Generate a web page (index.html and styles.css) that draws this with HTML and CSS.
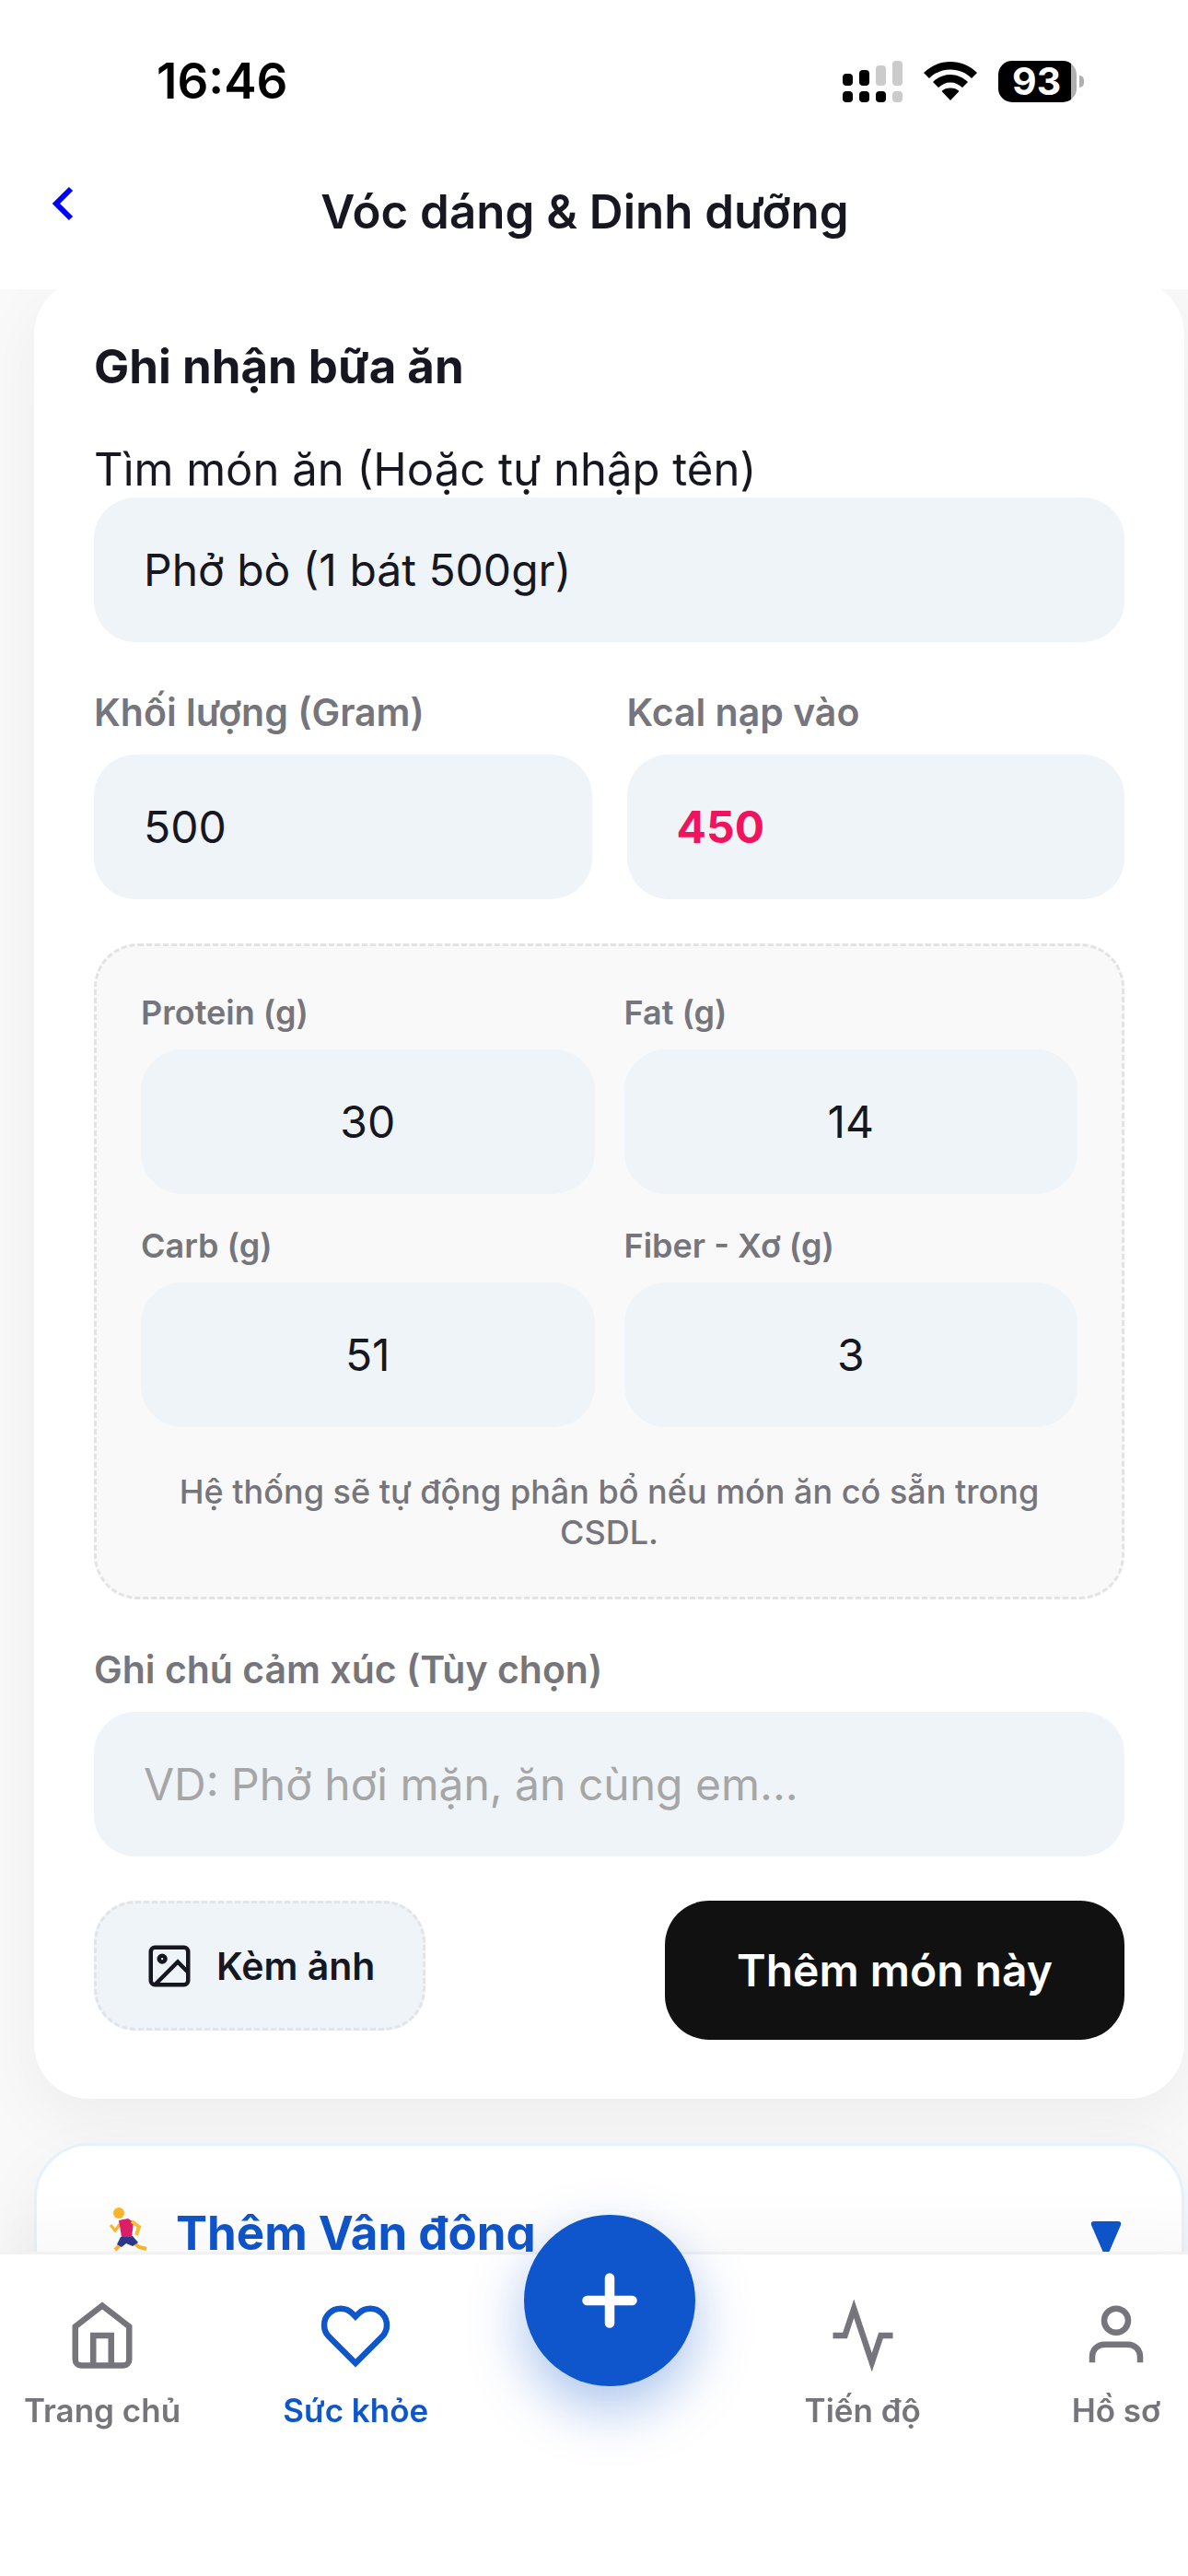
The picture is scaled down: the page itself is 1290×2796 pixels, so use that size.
FILE: index.html
```html
<!DOCTYPE html>
<html lang="vi">

<head>
    <meta charset="UTF-8">
    <meta name="viewport" content="width=device-width, initial-scale=1.0">
    <title>Vóc dáng &amp; Dinh dưỡng</title>
    <link rel="stylesheet" href="styles.css">
</head>

<body>
    <header class="topbar">
        <div class="status">
            <span class="time">16:46</span>
            <div class="status-icons">
                <svg class="signal" width="65" height="45" viewBox="0 0 65 45" fill="#000">
                    <rect x="0" y="14" width="11" height="13" rx="4"/>
                    <rect x="18" y="10" width="11" height="17" rx="4"/>
                    <rect x="36" y="5" width="11" height="22" rx="4" fill="#cbcbcb"/>
                    <rect x="54" y="0" width="11" height="27" rx="4" fill="#cbcbcb"/>
                    <rect x="0" y="33" width="11" height="12" rx="4"/>
                    <rect x="18" y="33" width="11" height="12" rx="4"/>
                    <rect x="36" y="33" width="11" height="12" rx="4"/>
                    <rect x="54" y="33" width="11" height="12" rx="4" fill="#cbcbcb"/>
                </svg>
                <svg class="wifi" width="58" height="45" viewBox="0 0 58 45" fill="#000">
                    <path d="M29 1C18 1 8 5 0 13l6 6C12 13 20 9.500 29 9.500S46 13 52 19l6-6C50 5 40 1 29 1z"/>
                    <path d="M29 15c-7 0-14 3-19 8l6 6c4-3.500 8-5.500 13-5.500s9 2 13 5.500l6-6c-5-5-12-8-19-8z"/>
                    <path d="M29 29.500c-4 0-7 1-9.500 3.500L29 43l9.500-10c-2.500-2.500-5.500-3.500-9.500-3.500z"/>
                </svg>
                <div class="battery"><span>93</span></div>
            </div>
        </div>
        <div class="title-row">
            <a class="back" href="#" aria-label="Quay lại">
                <svg width="24" height="38" viewBox="0 0 24 38" fill="none" stroke="#00f" stroke-width="6">
                    <path d="M21 3L5 19l16 16"/>
                </svg>
            </a>
            <h1>Vóc dáng &amp; Dinh dưỡng</h1>
        </div>
    </header>

    <main>
        <form class="card" onsubmit="return false">
            <h2>Ghi nhận bữa ăn</h2>

            <label class="search-label" for="food">Tìm món ăn (Hoặc tự nhập tên)</label>
            <input type="text" id="food" value="Phở bò (1 bát 500gr)">

            <div class="row">
                <div class="field">
                    <label for="weight">Khối lượng (Gram)</label>
                    <input type="text" inputmode="numeric" id="weight" value="500">
                </div>
                <div class="field">
                    <label for="kcal">Kcal nạp vào</label>
                    <input type="text" inputmode="numeric" id="kcal" class="kcal" value="450">
                </div>
            </div>

            <div class="macros">
                <div class="macro">
                    <label for="protein">Protein (g)</label>
                    <input type="text" inputmode="numeric" id="protein" value="30">
                </div>
                <div class="macro">
                    <label for="fat">Fat (g)</label>
                    <input type="text" inputmode="numeric" id="fat" value="14">
                </div>
                <div class="macro">
                    <label for="carb">Carb (g)</label>
                    <input type="text" inputmode="numeric" id="carb" value="51">
                </div>
                <div class="macro">
                    <label for="fiber">Fiber - Xơ (g)</label>
                    <input type="text" inputmode="numeric" id="fiber" value="3">
                </div>
                <p>Hệ thống sẽ tự động phân bổ nếu món ăn có sẵn trong CSDL.</p>
            </div>

            <div class="field">
                <label for="note">Ghi chú cảm xúc (Tùy chọn)</label>
                <input type="text" id="note" placeholder="VD: Phở hơi mặn, ăn cùng em...">
            </div>

            <div class="actions">
                <button type="button" class="attach">
                    <svg width="54" height="54" viewBox="0 0 24 24" fill="none" stroke="currentColor" stroke-width="2">
                        <rect x="3" y="3" width="18" height="18" rx="2"/>
                        <circle cx="8.500" cy="8.500" r="1.500"/>
                        <path d="M21 15l-5-5L5 21"/>
                    </svg>
                    Kèm ảnh
                </button>
                <button type="submit" class="submit">Thêm món này</button>
            </div>
        </form>

        <section class="card exercise">
            <h2>
                <svg width="60" height="54" viewBox="0 0 60 54">
                    <g fill="none" stroke="#fbb62b" stroke-width="4">
                        <path d="M27 41l-7 7"/>
                        <path d="M40 40l6 5 8 2"/>
                        <path d="M26 19l-6 8-5-6" stroke-width="3"/>
                    </g>
                    <path d="M26 34l13-1 6 7-6 4-7-3-5 4-5-3z" fill="#2b3a8f"/>
                    <path d="M24 16l10-2 6 4-2 16H27z" fill="#e01e6a"/>
                    <path d="M38 17l8 6-3 9" fill="none" stroke="#fbc02d" stroke-width="4"/>
                    <circle cx="24" cy="8" r="6" fill="#fbb62b"/>
                </svg>
                Thêm Vận động
            </h2>
            <svg class="arrow" width="34" height="40" viewBox="0 0 34 40" fill="#0f56cc">
                <path d="M4 1h26q4 0 3 4L20 35q-3 5-6 0L1 5Q0 1 4 1z"/>
            </svg>
        </section>
    </main>

    <nav class="tabbar">
        <a href="#">
            <svg viewBox="0 0 24 24"><path d="M3 9l9-7 9 7v11a2 2 0 0 1-2 2H5a2 2 0 0 1-2-2z"/><path d="M9 22V12h6v10"/></svg>
            Trang chủ
        </a>
        <a href="#" class="active">
            <svg viewBox="0 0 24 24"><path d="M20.840 4.610a5.500 5.500 0 0 0-7.780 0L12 5.670l-1.060-1.060a5.500 5.500 0 0 0-7.780 7.780l1.060 1.060L12 21.230l7.780-7.780 1.060-1.060a5.500 5.500 0 0 0 0-7.780z"/></svg>
            Sức khỏe
        </a>
        <div class="tab-middle">
            <button type="button" class="fab" aria-label="Thêm">
                <svg viewBox="0 0 24 24"><path d="M12 5v14M5 12h14"/></svg>
            </button>
        </div>
        <a href="#">
            <svg viewBox="0 0 24 24"><path d="M22 12h-4l-3 9L9 3l-3 9H2"/></svg>
            Tiến độ
        </a>
        <a href="#">
            <svg viewBox="0 0 24 24"><path d="M20 21v-2a4 4 0 0 0-4-4H8a4 4 0 0 0-4 4v2"/><circle cx="12" cy="7" r="4"/></svg>
            Hồ sơ
        </a>
    </nav>
</body>

</html>
```
FILE: styles.css
```css
* {
    box-sizing: border-box;
}

body {
    margin: 0;
    height: 100vh;
    overflow: hidden;
    background-color: #f9f9f9;
    color: #171721;
    font-family: Inter, "Noto Sans", sans-serif;
    font-size: 48px;
    display: flex;
    flex-direction: column;
}

h1,
h2 {
    margin: 0;
    font-size: 51px;
    line-height: 60px;
    font-weight: 700;
}

a {
    text-decoration: none;
}

input,
button {
    font-family: inherit;
    font-size: 48px;
    color: inherit;
    border: none;
}

/* top */

.topbar {
    flex: none;
    background-color: #fff;
    padding-bottom: 54px;
    z-index: 1;
}

.status {
    display: flex;
    justify-content: space-between;
    align-items: center;
    padding: 58px 121px 0 170px;
}

.time {
    font-size: 53px;
    line-height: 60px;
    font-weight: 600;
    color: #000;
}

.status-icons {
    display: flex;
    align-items: center;
    gap: 23px;
}

.battery {
    position: relative;
    width: 85px;
    height: 45px;
    border-radius: 15px;
    background: linear-gradient(to right, #000 79px, #b0b0b0 79px);
    color: #fff;
    font-size: 41px;
    line-height: 45px;
    font-weight: 700;
    padding-left: 15px;
}

.battery::after {
    content: "";
    position: absolute;
    left: 88px;
    top: 16px;
    width: 5px;
    height: 13px;
    border-radius: 0 6px 6px 0;
    background-color: #b0b0b0;
}

.title-row {
    display: flex;
    padding: 82px 56px 0;
}

.title-row h1 {
    flex: 1;
    text-align: center;
    font-weight: 600;
    padding: 0 44px 0 0;
}

.back {
    padding-top: 2px;
}

.back svg {
    display: block;
}

/* form */

main {
    flex: 1;
    min-height: 0;
    margin-top: -11px;
    padding: 0 4px 0 37px;
}

.card {
    background-color: #fff;
    border-radius: 60px;
    padding: 65px 65px 64px;
    box-shadow: 0 24px 72px rgba(0, 0, 0, 0.05);
}

.search-label {
    display: block;
    margin-top: 52px;
    font-size: 49px;
    line-height: 60px;
}

input {
    display: block;
    width: 100%;
    height: 157px;
    padding: 0 54px;
    border-radius: 45px;
    background-color: #eff4f9;
}

input::placeholder {
    color: #a6a6a6;
    opacity: 1;
}

.row {
    display: grid;
    grid-template-columns: 1fr 1fr;
    gap: 38px;
}

.field {
    margin-top: 48px;
}

.field label {
    display: block;
    font-size: 41px;
    line-height: 56px;
    font-weight: 600;
    color: #75757b;
    margin-bottom: 18px;
}

.kcal {
    color: #f0145f;
    font-weight: 700;
}

.macros {
    display: grid;
    grid-template-columns: 1fr 1fr;
    gap: 32px;
    margin-top: 48px;
    padding: 48px;
    border: 3px dashed #e3e3e5;
    border-radius: 48px;
    background-color: #f9f9f9;
}

.macro label {
    display: block;
    font-size: 36px;
    line-height: 48px;
    font-weight: 600;
    color: #75757b;
    margin-bottom: 16px;
}

.macro input {
    text-align: center;
}

.macros p {
    grid-column: span 2;
    margin: 16px 0 0;
    font-size: 36px;
    line-height: 44px;
    font-weight: 500;
    color: #75757b;
    text-align: center;
}

.actions {
    display: flex;
    justify-content: space-between;
    align-items: flex-start;
    margin-top: 48px;
}

.attach {
    display: flex;
    align-items: center;
    gap: 24px;
    height: 141px;
    padding: 0 52px;
    border: 3px dashed #e1e4e8;
    border-radius: 45px;
    background-color: #eff4f9;
    font-size: 41px;
    font-weight: 600;
}

.submit {
    height: 151px;
    padding: 0 78px;
    border-radius: 48px;
    background-color: #111;
    color: #fff;
    font-weight: 600;
}

.exercise {
    display: flex;
    justify-content: space-between;
    height: 300px;
    margin-top: 48px;
    border: 3px solid #e3f2fd;
    color: #0f56cc;
}

.exercise h2 {
    display: flex;
    gap: 26px;
}

.arrow {
    margin-top: 16px;
}

/* bottom */

.tabbar {
    position: fixed;
    left: 0;
    right: -33px;
    bottom: 0;
    height: 352px;
    display: flex;
    justify-content: space-between;
    padding: 49px 12px 0;
    background-color: #fff;
    border-top: 3px solid #f2f2f2;
    box-shadow: 0 -24px 60px rgba(0, 0, 0, 0.03);
}

.tabbar a,
.tab-middle {
    width: 198px;
    display: flex;
    flex-direction: column;
    align-items: center;
    gap: 20px;
    font-size: 35px;
    line-height: 44px;
    font-weight: 600;
    color: #75757b;
    white-space: nowrap;
}

.tabbar .active {
    color: #0f56cc;
}

.tabbar svg {
    width: 78px;
    height: 78px;
    fill: none;
    stroke: currentColor;
    stroke-width: 2;
}

.fab {
    flex: none;
    display: flex;
    align-items: center;
    justify-content: center;
    width: 186px;
    height: 186px;
    margin-top: -92px;
    padding: 0;
    border-radius: 50%;
    background-color: #0f56cc;
    color: #fff;
    box-shadow: 0 24px 60px rgba(15, 86, 204, 0.35);
}

.tabbar .fab svg {
    width: 84px;
    height: 84px;
    stroke-width: 3;
    stroke-linecap: round;
}
```
